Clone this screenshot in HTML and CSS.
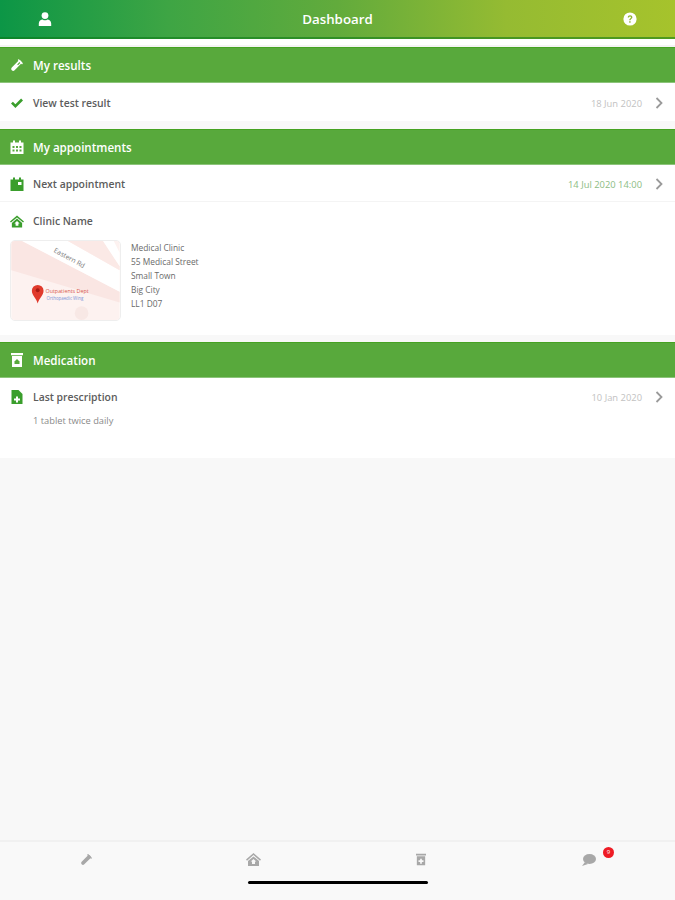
FILE: index.html
```html
<!DOCTYPE html>
<html lang="en">
<head>
<meta charset="utf-8">
<title>Dashboard</title>
<link rel="stylesheet" href="styles.css">
</head>
<body>
<div class="app">
  <header class="topbar">
    <svg class="top-icon" width="14" height="14" viewBox="0 0 14 14"><circle cx="7" cy="3.600" r="3.400" fill="#fff"/><path d="M0.800 14v-2.600C0.800 8.800 3 7.600 4.600 7.400 5.400 8 6.100 8.200 7 8.200s1.600-.2 2.400-.8c1.600.2 3.800 1.400 3.800 4V14z" fill="#fff"/></svg>
    <h1 class="title">Dashboard</h1>
    <svg class="top-icon" width="14" height="14" viewBox="0 0 14 14"><circle cx="7" cy="7" r="6.600" fill="#fff"/><path d="M4.700 5.400C4.800 4 5.800 3.300 7.100 3.300c1.300 0 2.300.8 2.300 1.900 0 1.700-1.900 1.600-1.900 3.100H6.200c0-2.100 1.800-2 1.800-3.100 0-.5-.4-.8-.9-.8-.6 0-1 .4-1.100 1z" fill="#8fb52c"/><rect x="6.200" y="9.200" width="1.400" height="1.500" fill="#8fb52c"/></svg>
  </header>

  <main class="content">
    <section class="section first">
      <div class="bar">
        <svg class="bar-icon" width="14" height="14" viewBox="0 0 14 14"><path d="M3.200 10.800L9.600 4.400" stroke="#fff" stroke-width="4" stroke-linecap="round" fill="none"/><path d="M8.600 2l3.400 3.400" stroke="#fff" stroke-width="1.500" stroke-linecap="round"/><path d="M7.600 6.800L9.900 4.500" stroke="#58a93c" stroke-width="1.100"/></svg>
        <span class="bar-label">My results</span>
      </div>
      <div class="row row-low">
        <svg class="row-icon" width="14" height="14" viewBox="0 0 14 14"><path d="M1 7.600l1.900-1.900 2.500 2.500 5.700-5.700L13 4.400 5.400 12z" fill="#3a9e2c"/></svg>
        <span class="row-label">View test result</span>
        <span class="row-date">18 Jun 2020</span>
        <svg class="chev" width="8" height="12" viewBox="0 0 8 12"><path d="M1.500 1l5 5-5 5" fill="none" stroke="#9a9a9a" stroke-width="1.800"/></svg>
      </div>
    </section>

    <section class="section wide-gap">
      <div class="bar">
        <svg class="bar-icon" width="13" height="14" viewBox="0 0 13 14"><path d="M0 2.500h2.500V.5h2v2h4v-2h2v2H13V14H0z" fill="#fff"/><path d="M2 6h2v2H2zM5.500 6h2v2h-2zM9 6h2v2H9zM2 9.500h2v2H2zM5.500 9.500h2v2h-2zM9 9.500h2v2H9z" fill="#58a93c"/></svg>
        <span class="bar-label">My appointments</span>
      </div>
      <div class="row row-low row-line">
        <svg class="row-icon" width="13" height="14" viewBox="0 0 13 14"><path d="M0 2.500h2.500V.5h2v2h4v-2h2v2H13V14H0z" fill="#3a9e2c"/><path d="M7.500 5h3.500v3H7.500z" fill="#fff"/></svg>
        <span class="row-label">Next appointment</span>
        <span class="row-date accent">14 Jul 2020 14:00</span>
        <svg class="chev" width="8" height="12" viewBox="0 0 8 12"><path d="M1.500 1l5 5-5 5" fill="none" stroke="#9a9a9a" stroke-width="1.800"/></svg>
      </div>
      <div class="clinic">
        <div class="clinic-head">
          <svg class="row-icon" width="15" height="13" viewBox="0 0 15 13"><path d="M7.500 0L15 6.500l-1 1.200-6.500-5.600L1 7.700 0 6.500z" fill="#3a9e2c"/><path d="M7.500 3.400L13 8v5H2V8z" fill="#3a9e2c"/><path d="M7.500 6l2.800 2.600H9V11H6V8.600H4.700z" fill="#fff"/></svg>
          <span class="row-label">Clinic Name</span>
        </div>
        <div class="clinic-body">
          <svg class="map" width="111" height="81" viewBox="0 0 111 81">
            <rect width="111" height="81" fill="#fdf2f0"/>
            <path d="M0 0h11L111 52v11L0 30z" fill="#fae6e3"/>
            <path d="M11 0h47l53 30v22z" fill="#ffffff"/>
            <path d="M58 0h36l17 26v4z" fill="#fbe9e6"/>
            <path d="M94 0h11l6 12v14z" fill="#ffffff"/>
            <circle cx="72" cy="74" r="7" fill="#f8e8e5"/>
            <text class="map-road" x="43" y="11" transform="rotate(29 43 11)">Eastern Rd</text>
            <path d="M27 64c-1.200-5-6-8-6-13a6 6 0 0 1 12 0c0 5-4.800 8-6 13z" fill="#e03a2c"/>
            <circle cx="27" cy="50.500" r="2" fill="#a81c14"/>
            <text class="map-place" x="35" y="53">Outpatients Dept</text>
            <text class="map-sub" x="36" y="60.500">Orthopaedic Wing</text>
          </svg>
          <address class="address">
            <span>Medical Clinic</span>
            <span>55 Medical Street</span>
            <span>Small Town</span>
            <span>Big City</span>
            <span>LL1 D07</span>
          </address>
        </div>
      </div>
    </section>

    <section class="section">
      <div class="bar">
        <svg class="bar-icon" width="12" height="14" viewBox="0 0 12 14"><path d="M0 0h12v2.200H0zM1 3h10v11H1z" fill="#fff"/><path d="M6 6l2.500 2.500V11h-5V8.500z" fill="#58a93c"/></svg>
        <span class="bar-label">Medication</span>
      </div>
      <div class="row">
        <svg class="row-icon" width="11" height="14" viewBox="0 0 11 14"><path d="M0 0h7l4 4v10H0z" fill="#3a9e2c"/><path d="M4.500 6.500h2v2h2v2h-2v2h-2v-2h-2v-2h2z" fill="#fff"/></svg>
        <span class="row-label">Last prescription</span>
        <span class="row-date">10 Jan 2020</span>
        <svg class="chev" width="8" height="12" viewBox="0 0 8 12"><path d="M1.500 1l5 5-5 5" fill="none" stroke="#9a9a9a" stroke-width="1.800"/></svg>
      </div>
      <p class="note">1 tablet twice daily</p>
    </section>
  </main>

  <nav class="tabbar">
    <svg class="tab tab-1" width="13" height="13" viewBox="0 0 14 14"><path d="M3.200 10.800L9.600 4.400" stroke="#a8a8a8" stroke-width="4" stroke-linecap="round" fill="none"/><path d="M8.600 2l3.400 3.400" stroke="#a8a8a8" stroke-width="1.500" stroke-linecap="round"/></svg>
    <svg class="tab tab-2" width="15" height="13" viewBox="0 0 15 13"><path d="M7.500 0L15 6.500l-1 1.200-6.500-5.600L1 7.700 0 6.500z" fill="#a8a8a8"/><path d="M7.500 3.400L13 8v5H2V8z" fill="#a8a8a8"/><path d="M7.500 6l2.800 2.600H9V11H6V8.600H4.700z" fill="#f8f8f8"/></svg>
    <svg class="tab tab-3" width="10" height="13" viewBox="0 0 12 14"><path d="M0 0h12v2.200H0zM1 3h10v11H1z" fill="#a8a8a8"/><path d="M5 6h2v2h2v2H7v2H5v-2H3V8h2z" fill="#f8f8f8"/></svg>
    <div class="tab tab-4">
      <svg width="14" height="12" viewBox="0 0 14 12"><ellipse cx="7.500" cy="5" rx="6.500" ry="5" fill="#a8a8a8"/><path d="M3 8L0 12l6-2z" fill="#a8a8a8"/></svg>
      <span class="badge">9</span>
    </div>
    <div class="home-indicator"></div>
  </nav>
</div>
</body>
</html>
```

FILE: styles.css
```css
* { box-sizing: border-box; }
html, body { margin: 0; padding: 0; }
body {
  width: 675px;
  height: 900px;
  overflow: hidden;
  background: #f8f8f8;
  font-family: "Open Sans", "Noto Sans", sans-serif;
  color: #555;
}
.app {
  height: 900px;
  display: flex;
  flex-direction: column;
}
.topbar {
  height: 39px;
  flex: none;
  display: flex;
  align-items: center;
  justify-content: space-between;
  padding: 0 38px;
  background: linear-gradient(90deg, #0c9646 0%, #3ea544 25%, #62ab3c 50%, #95bb32 75%, #a6c32c 100%);
  border-bottom: 2px solid rgba(10, 120, 20, .55);
}
.title {
  margin: 0;
  font-size: 13.300px;
  font-weight: 600;
  color: #fff;
  line-height: 36px;
}
.content {
  flex: 1;
  min-height: 0;
  background: linear-gradient(#fff 6px, #f4f4f4 6px, #f4f4f4 8px, #f8f8f8 8px);
}
.section { margin-top: 7px; }
.section.first { margin-top: 8px; }
.section.wide-gap { margin-top: 8px; }
.bar {
  height: 36px;
  display: flex;
  align-items: center;
  gap: 9px;
  padding-left: 10px;
  background: #58a93c;
  border-top: 1px solid #46a222;
  border-bottom: 1px solid #8cc47a;
}
.bar-icon { flex: none; width: 14px; }
.bar-label {
  font-size: 11.600px;
  font-weight: 600;
  color: #fff;
}
.row {
  height: 38px;
  display: flex;
  align-items: center;
  gap: 9px;
  padding: 0 12px 0 10px;
  background: #fff;
}
.row-low { padding-top: 2px; }
.row-line { height: 37px; border-bottom: 1px solid #f4f4f4; }
.row-icon { flex: none; width: 14px; }
.row-label {
  font-size: 10.400px;
  font-weight: 600;
  color: #5c5c5c;
  flex: 1;
}
.row-date {
  font-size: 9.400px;
  color: #c2c2c2;
  margin-right: 4px;
}
.row-date.accent { color: #8cbc84; }
.chev { flex: none; }
.clinic {
  height: 133px;
  background: #fff;
  padding: 12px 0 0 10px;
}
.clinic-head {
  display: flex;
  align-items: center;
  gap: 9px;
  height: 14px;
}
.clinic-body {
  display: flex;
  gap: 10px;
  margin-top: 12px;
}
.map {
  flex: none;
  border: 1px solid #eee;
  border-radius: 5px;
}
.map-road { font: 7px "Open Sans", sans-serif; fill: #7a7a7a; }
.map-place { font: 5.500px "Open Sans", sans-serif; fill: #d8594c; }
.map-sub { font: 4.500px "Open Sans", sans-serif; fill: #7a93d8; }
.address {
  display: flex;
  flex-direction: column;
  font-style: normal;
  font-size: 8.400px;
  line-height: 14px;
  color: #6a6a6a;
  padding-top: 1px;
}
.note {
  margin: 0;
  height: 42px;
  padding: 0 0 0 33px;
  background: #fff;
  font-size: 9.300px;
  line-height: 10px;
  color: #8a8a8a;
}
.tabbar {
  position: relative;
  height: 60px;
  flex: none;
  background: #f9f9f9;
  border-top: 2px solid #f1f1f1;
}
.tab { position: absolute; top: 11px; }
.tab-1 { left: 80px; }
.tab-2 { left: 246px; }
.tab-3 { left: 416px; }
.tab-4 { left: 582px; width: 34px; height: 14px; }
.tab-4 svg { display: block; margin-top: 1px; }
.badge {
  position: absolute;
  left: 21px;
  top: -6px;
  width: 11px;
  height: 11px;
  border-radius: 50%;
  background: #ee1c25;
  color: #fff;
  font-size: 6px;
  line-height: 11px;
  text-align: center;
}
.home-indicator {
  position: absolute;
  left: 248px;
  top: 39px;
  width: 180px;
  height: 3px;
  border-radius: 2px;
  background: #000;
}
```
